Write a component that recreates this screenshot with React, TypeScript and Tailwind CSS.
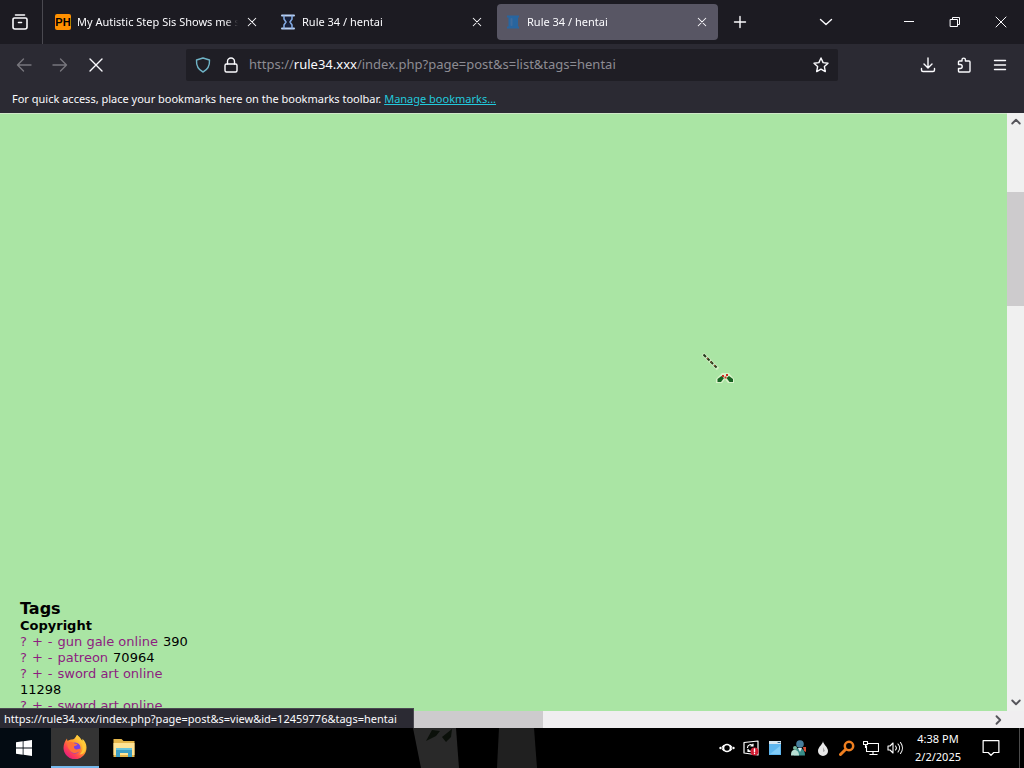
import type { ReactNode } from "react";

const ui = "font-['Noto_Sans','Open_Sans',sans-serif]";

function Icon({ children, className = "size-4" }: { children: ReactNode; className?: string }) {
  return (
    <svg
      viewBox="0 0 16 16"
      className={`shrink-0 ${className}`}
      fill="none"
      stroke="currentColor"
      strokeWidth="1.4"
      strokeLinecap="round"
      strokeLinejoin="round"
      aria-hidden="true"
    >
      {children}
    </svg>
  );
}

function HourglassIcon() {
  return (
    <Icon>
      <path d="M2 1.5h12M2 14.5h12" stroke="#b9d2f5" strokeWidth="2" />
      <path d="M4 2v3l2 3-2 3v3M12 2v3l-2 3 2 3v3" stroke="#7ea6e0" strokeWidth="1.6" />
      <path d="M5.5 3h5v2L8 8l2.5 3v2h-5v-2L8 8 5.5 5z" fill="#16213f" stroke="none" />
    </Icon>
  );
}

function LoadingHourglassIcon() {
  return (
    <Icon>
      <path d="M2 1.500h12v2h-1v9h1v2H2v-2h1.500v-9H2z" fill="#28659f" stroke="none" />
      <path d="M6.500 5v6" stroke="#3f6c9d" strokeWidth="2" />
    </Icon>
  );
}

function HubIcon() {
  return (
    <span className="grid size-4 shrink-0 place-items-center rounded-xs bg-[#ff9000] font-['Liberation_Sans',sans-serif] text-[11px] leading-4 font-bold text-black">
      PH
    </span>
  );
}

function Tab({ title, icon, active = false }: { title: string; icon: ReactNode; active?: boolean }) {
  return (
    <div
      className={`mx-0.5 flex h-9 min-w-0 flex-1 items-center gap-[6px] rounded px-2 ${active ? "bg-[#585664]" : ""}`}
    >
      {icon}
      <span className="min-w-0 flex-1 overflow-hidden mask-r-from-92% mask-r-to-100% whitespace-nowrap">{title}</span>
      <button type="button" aria-label={`Close ${title}`} className="grid size-4 shrink-0 place-items-center">
        <Icon className="size-3">
          <path d="m3 3 10 10M13 3 3 13" />
        </Icon>
      </button>
    </div>
  );
}

function TabBar() {
  return (
    <header className="flex h-11 shrink-0 items-center bg-[#1c1b22]">
      <button type="button" aria-label="Firefox View" className="grid h-11 w-[43px] shrink-0 place-items-center border-r border-[#4a4950] pr-0.5">
        <Icon className="size-4">
          <path d="M3.500 1h9M2.500 4h11A1.500 1.500 0 0 1 15 5.500V13a2 2 0 0 1-2 2H3a2 2 0 0 1-2-2V5.500A1.500 1.500 0 0 1 2.500 4zM6.500 8.500h3" strokeWidth="1.600" />
        </Icon>
      </button>
      <div className="flex min-w-0 flex-1 items-center">
        <div className="flex max-w-[677px] min-w-0 flex-1 pl-0.5">
          <Tab title="My Autistic Step Sis Shows me s" icon={<HubIcon />} />
          <Tab title="Rule 34 / hentai" icon={<HourglassIcon />} />
          <Tab title="Rule 34 / hentai" icon={<LoadingHourglassIcon />} active />
        </div>
        <button type="button" aria-label="New tab" className="grid size-10 shrink-0 place-items-center">
          <Icon>
            <path d="M8 2.500v11M2.500 8h11" />
          </Icon>
        </button>
      </div>
      <button type="button" aria-label="List all tabs" className="mr-10 grid h-11 w-10 place-items-center">
        <Icon>
          <path d="m2.500 5.500 5.500 5 5.500-5" />
        </Icon>
      </button>
      <button type="button" aria-label="Minimize" className="grid h-11 w-[46px] place-items-center">
        <Icon>
          <path d="M3.500 7.500h9" strokeWidth="1" strokeLinecap="square" />
        </Icon>
      </button>
      <button type="button" aria-label="Restore" className="grid h-11 w-[46px] place-items-center">
        <Icon>
          <path d="M3.500 5.500h7v7h-7zM5.500 5.500v-2h7v7h-2" strokeWidth="1" />
        </Icon>
      </button>
      <button type="button" aria-label="Close window" className="grid h-11 w-[46px] place-items-center">
        <Icon>
          <path d="m3 3 10 10M13 3 3 13" strokeWidth="1" />
        </Icon>
      </button>
    </header>
  );
}

function NavBar() {
  return (
    <nav className="flex h-[42px] shrink-0 items-center bg-[#2b2a33]">
      <div className="flex w-[186px] shrink-0 gap-1 pl-2">
        <button type="button" aria-label="Back" disabled className="grid size-8 place-items-center text-[#77767d]">
          <Icon>
            <path d="M15 8H1.500m6-6-6 6 6 6" />
          </Icon>
        </button>
        <button type="button" aria-label="Forward" disabled className="grid size-8 place-items-center text-[#77767d]">
          <Icon>
            <path d="M1 8h13.500m-6-6 6 6-6 6" />
          </Icon>
        </button>
        <button type="button" aria-label="Stop" className="grid size-8 place-items-center">
          <Icon>
            <path d="m2 2 12 12m0-12L2 14" />
          </Icon>
        </button>
      </div>
      <form className="flex h-8 min-w-0 flex-1 items-center rounded-xs bg-[#1f1e25] px-[9px]" onSubmit={(e) => e.preventDefault()}>
        <Icon className="size-4 text-[#6fb3c6]">
          <path d="M8 1 14.500 3c.3 5-1.500 9.500-6.500 12C3 12.500 1.200 8 1.500 3z" />
        </Icon>
        <Icon className="ml-3 size-4">
          <rect x="2" y="7" width="12" height="8" rx="1.500" />
          <path d="M4.500 7V4.500a3.500 3.500 0 0 1 7 0V7" />
        </Icon>
        <p className="ml-2.5 min-w-0 flex-1 truncate text-[13px] text-[#8d8c93]">
          https://<span className="text-[#fbfbfe]">rule34.xxx</span>/index.php?page=post&amp;s=list&amp;tags=hentai
        </p>
        <button type="button" aria-label="Bookmark this page">
          <Icon>
            <path d="m8 1 2.100 4.600 4.900.6-3.600 3.400.9 5L8 12.200l-4.300 2.400.9-5L1 6.200l4.900-.6z" />
          </Icon>
        </button>
      </form>
      <div className="flex w-[186px] shrink-0 justify-end gap-1 pr-2">
        <button type="button" aria-label="Downloads" className="grid size-8 place-items-center">
          <Icon>
            <path d="M8 1v9.500M4 7l4 4 4-4M1.500 11.500V13A1.500 1.500 0 0 0 3 14.500h10a1.500 1.500 0 0 0 1.500-1.500v-1.500" />
          </Icon>
        </button>
        <button type="button" aria-label="Extensions" className="grid size-8 place-items-center">
          <Icon>
            <path d="M2.500 7.500V5a1 1 0 0 1 1-1H6V2.800a1.700 1.700 0 0 1 3.400 0V4H13a1 1 0 0 1 1 1v9a1 1 0 0 1-1 1H3.500a1 1 0 0 1-1-1v-2.500h1.700a2 2 0 0 0 0-4z" />
          </Icon>
        </button>
        <button type="button" aria-label="Open application menu" className="grid size-8 place-items-center">
          <Icon>
            <path d="M2.500 3.500h11M2.500 8h11M2.500 12.500h11" />
          </Icon>
        </button>
      </div>
    </nav>
  );
}

const tags = [
  { name: "gun gale online", count: 390 },
  { name: "patreon", count: 70964 },
  { name: "sword art online", count: 11298 },
  { name: "sword art online", count: null },
];

function TagLink({ children }: { children: ReactNode }) {
  return (
    <a href="#" className="text-[#8d1d80]">
      {children}
    </a>
  );
}

function Page() {
  return (
    <main className="relative flex min-h-0 flex-1 flex-col">
      <div className="flex min-h-0 flex-1">
        <div className="min-w-0 flex-1 overflow-hidden border-t border-[#cfe8c8] bg-[#aae5a4]">
          <aside className="w-[190px] pt-[486px] pl-5 font-['DejaVu_Sans',Verdana,sans-serif] text-[13px] leading-4 text-black">
            <h1 className="text-base leading-[18px] font-bold">Tags</h1>
            <h2 className="font-bold">Copyright</h2>
            <ul>
              {tags.map((tag, index) => (
                <li key={index} className="flex flex-wrap gap-x-[5px]">
                  <TagLink>?</TagLink>
                  <TagLink>+</TagLink>
                  <TagLink>-</TagLink>
                  <TagLink>{tag.name}</TagLink>
                  {tag.count !== null && <span>{tag.count}</span>}
                </li>
              ))}
            </ul>
          </aside>
        </div>
        <div className="flex w-[17px] shrink-0 flex-col items-center bg-[#f0f0f0] text-[#55545a]">
          <Icon className="my-[3px] size-3">
            <path d="m3 10 5-5 5 5" strokeWidth="2.500" />
          </Icon>
          <div className="mt-[61px] h-[19%] w-full bg-[#cdcbcd]" />
          <Icon className="mt-auto mb-[3px] size-3">
            <path d="m3 6 5 5 5-5" strokeWidth="2.500" />
          </Icon>
        </div>
      </div>
      <div className="flex h-[17px] shrink-0 items-center bg-[#f0eef0] text-[#55545a]">
        <div className="h-full w-[53%] bg-[#cdcbcd]" />
        <Icon className="mr-5 ml-auto size-3">
          <path d="m6 3 5 5-5 5" strokeWidth="2.500" />
        </Icon>
      </div>
      <div className="absolute bottom-0 left-0 h-5 min-w-[414px] border-t border-r border-[#4a4950] bg-[#2b2a33] px-1 leading-[19px] text-[#fbfbfe]">
        https://rule34.xxx/index.php?page=post&amp;s=view&amp;id=12459776&amp;tags=hentai
      </div>
      <svg viewBox="0 0 34 34" className="absolute top-[238px] left-[701px] size-[34px]" aria-hidden="true">
        <path d="m2 3 15 15" stroke="#d3efc4" strokeWidth="3.500" />
        <path d="m2.500 3.500 14 14" stroke="#233a1c" strokeWidth="2" strokeDasharray="3.500 1.500" />
        <path d="m6 7 10 10" stroke="#b0502a" strokeWidth="1" strokeDasharray="1.500 3.500" />
        <path d="M15 32v-4l6-6h7l5 6v4h-6l-3-4-3 4z" fill="#d9f2c9" />
        <path d="M16.500 31v-3l4-3 2.500 2-3 4zM32 31v-3l-4-3-2.500 2 3 4z" fill="#176322" />
        <path d="M21 24h2v2h-2zM25 23h2v2h-2zM23.500 25.500h2v2h-2z" fill="#cb2c24" />
      </svg>
    </main>
  );
}

function FirefoxLogo() {
  return (
    <svg viewBox="0 0 24 24" className="size-6" aria-hidden="true">
      <defs>
        <linearGradient id="fox" x1="0.85" y1="0.1" x2="0.15" y2="0.95">
          <stop offset="0" stopColor="#ffe14a" />
          <stop offset="0.4" stopColor="#ff9a28" />
          <stop offset="0.7" stopColor="#ff4450" />
          <stop offset="1" stopColor="#e31587" />
        </linearGradient>
      </defs>
      <path d="M14 0c3 2 4 4 5 6 .5-.7.500-1.500.300-2.300C22 6 23.500 9 23.500 12.500A11.500 11.500 0 0 1 .500 13C.5 9 2 6 4 3.500c0 1 .2 1.800.7 2.500C6 5 7.500 4.500 9 4.500c2 0 3-1.500 5-4.500z" fill="url(#fox)" />
      <circle cx="12" cy="13" r="5.500" fill="#7542e5" />
      <path d="M4.500 8c3-1.500 5.500-1 7 .5l3 .5c-.5 1.500-2 2-3.500 2.300-.5 2.500 2 4 4.500 2.700 1-.5 2-.3 2.500.5-2 4-8 5-11 1C5 13 4 11 4.500 8z" fill="#ff7139" />
      <path d="M13 4c4 1 6 4 6.500 8 .5 3-1 6-3 7.500 5 0 7-5 6-9-1-3-3-4.500-5-6.500-2-2-3-3-3-4-1.500 1-2 2.500-1.500 4z" fill="#ffc737" />
    </svg>
  );
}

function FolderLogo() {
  return (
    <svg viewBox="0 0 24 24" className="size-6" aria-hidden="true">
      <path d="M1.500 3h8l2 2h11v16h-21z" fill="#e5b64b" />
      <path d="M1.500 7h21v12h-21z" fill="#ffe394" />
      <path d="M4 12h16v9h-4v-4H8v4H4z" fill="#3e9fc4" />
      <path d="M4 12h16v2H4z" fill="#69c4dc" />
    </svg>
  );
}

function Tray() {
  return (
    <div className="flex items-center gap-2 text-white">
      <Icon>
        <path d="M5 5.500 3.500 7M11 5.500 12.500 7M5 10.500 3.500 9M11 10.500 12.500 9" strokeWidth="1.600" />
        <circle cx="8" cy="8" r="3.500" strokeWidth="1.600" />
        <circle cx="1.500" cy="8" r="1.200" fill="currentColor" stroke="none" />
        <circle cx="14.500" cy="8" r="1.200" fill="currentColor" stroke="none" />
      </Icon>
      <Icon>
        <path d="M1 2.500 15 1v14L1 13z" strokeWidth="1.200" />
        <path d="M4.500 7.500a3 3 0 0 1 5.500-1.500V4M10 6H8M5 9.500v2h2M5 9.500c1 1.500 2 2 3.500 1.800" strokeWidth="1.200" />
        <circle cx="11.500" cy="11.500" r="4" fill="#d31f35" stroke="none" />
        <path d="M11.500 9v2.800m0 1.700v.1" />
      </Icon>
      <Icon>
        <path d="M2 1h12v14H2z" fill="#5eb6ee" stroke="none" />
        <path d="M2 1h12v3H2z" fill="#d8e6ef" stroke="none" />
        <path d="M11 2.500h2" stroke="#315f85" strokeWidth="1" />
        <path d="M3 14 13 6v8z" fill="#81ccf7" stroke="none" />
      </Icon>
      <Icon>
        <circle cx="9" cy="4" r="3.800" fill="#477e9d" stroke="none" />
        <path d="M3 15.500c0-5 2-7.500 5-7.500s6 2 6 7.500z" fill="#398e89" stroke="none" />
        <path d="M0 15.500c0-4 1-5.500 3.500-5.500s4.500 1.500 4.500 5.500z" fill="#b8dfd3" stroke="none" />
        <circle cx="4" cy="8" r="2" fill="#76b9a1" stroke="none" />
        <path d="M7 8h4l-2 4z" fill="#e1edf0" stroke="none" />
        <path d="M12 7h3v5l-2-1z" fill="#dc5037" stroke="none" />
      </Icon>
      <Icon>
        <path d="M8 1c0 3 5 6 5 10a5 5 0 0 1-10 0c0-4 5-7 5-10z" fill="#e8e8e8" stroke="none" />
        <path d="M8 7v5l2-1z" fill="#aaa" stroke="none" />
      </Icon>
      <Icon className="size-4 text-[#ef7f20]">
        <circle cx="10" cy="6" r="4.200" strokeWidth="2.500" />
        <path d="m6.500 9.500-5 5" strokeWidth="3" />
      </Icon>
      <Icon>
        <path d="M5 3.500h10.500v8H3.500V6M7 14.500h7M10 11.500v3M.500 1.500h4v3h-4zM2.500 4.500v3" strokeWidth="1.100" strokeLinecap="square" />
      </Icon>
      <Icon>
        <path d="M1 6h2l3-3v10l-3-3H1zM8.500 6a3 3 0 0 1 0 4M11 4a6 6 0 0 1 0 8M13.500 2.500a9 9 0 0 1 0 11" strokeWidth="1.100" />
      </Icon>
    </div>
  );
}

function Taskbar() {
  return (
    <footer className="flex h-10 shrink-0 items-center bg-black">
      <button type="button" aria-label="Start" className="grid h-10 w-[51px] place-items-center bg-[#030b12] pr-1">
        <svg viewBox="0 0 16 16" className="size-4" fill="#fff" aria-hidden="true">
          <path d="M0 2.300 6.700 1.300v6.300H0zM7.500 1.200 16 0v7.600H7.500zM0 8.400h6.700v6.300L0 13.700zM7.500 8.400H16V16l-8.500-1.200z" />
        </svg>
      </button>
      <button type="button" aria-label="Firefox" className="grid h-10 w-12 place-items-center border-b-2 border-[#76b9ed] bg-[#343434]">
        <FirefoxLogo />
      </button>
      <button type="button" aria-label="File Explorer" className="grid h-10 w-[49px] place-items-center">
        <FolderLogo />
      </button>
      <svg viewBox="0 0 130 40" className="ml-[262px] h-10 w-[130px]" aria-hidden="true">
        <path d="M3 0h43l3 40H11z" fill="#292929" />
        <path d="M16 13 22 2l8 1-4 5zM32 9l10-8-1 8-5 5z" fill="#0b100a" />
        <path d="M89 0h35l3 40H87z" fill="#202020" />
      </svg>
      <div className="ml-auto flex h-full items-center">
        <Tray />
        <time className="w-[70px] text-center leading-[18px] text-white">
          4:38 PM
          <br />
          2/2/2025
        </time>
        <button type="button" aria-label="Notifications" className="grid h-10 w-9 place-items-center text-white">
          <Icon className="size-[18px]">
            <path d="M1 1.500h14v10.500h-4.500L8 14.500 5.500 12H1z" strokeWidth="1.100" />
          </Icon>
        </button>
        <div className="ml-2.5 h-full w-[5px] border-l border-[#4b4b4b]" />
      </div>
    </footer>
  );
}

export default function App() {
  return (
    <div className={`flex h-screen flex-col overflow-hidden text-[11px] text-[#fbfbfe] ${ui}`}>
      <TabBar />
      <NavBar />
      <div className="h-[27px] shrink-0 bg-[#2b2a33] px-3 leading-[26px] whitespace-nowrap">
        For quick access, place your bookmarks here on the bookmarks toolbar.{" "}
        <a href="#" className="text-[#22c9dc] underline">
          Manage bookmarks...
        </a>
      </div>
      <Page />
      <Taskbar />
    </div>
  );
}
